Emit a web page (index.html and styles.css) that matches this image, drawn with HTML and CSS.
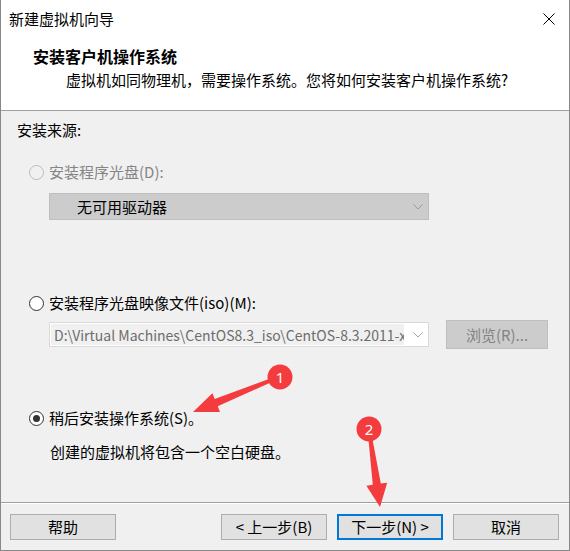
FILE: index.html
```html
<!DOCTYPE html>
<html lang="zh-CN">

<head>
    <meta charset="UTF-8">
    <title>新建虚拟机向导</title>
    <link rel="stylesheet" href="styles.css">
</head>

<body>

    <div class="window">
        <div class="top">
            <div class="titlebar">
                <span class="title">新建虚拟机向导</span>
                <svg class="close" width="12" height="12" viewBox="0 0 12 12">
                    <path d="M0.5 0.5 L11.5 11.5 M11.5 0.5 L0.5 11.5" stroke="#000" stroke-width="1" fill="none" />
                </svg>
            </div>
            <h1 class="heading">安装客户机操作系统</h1>
            <p class="subheading">虚拟机如同物理机，需要操作系统。您将如何安装客户机操作系统?</p>
        </div>

        <div class="content">
            <div class="label">安装来源:</div>

            <div class="option option-disc disabled">
                <span class="radio"></span>
                <span>安装程序光盘(D):</span>
            </div>
            <div class="select select-disabled">
                <span class="select-text">无可用驱动器</span>
                <svg class="chevron" width="10" height="6" viewBox="0 0 10 6">
                    <path d="M0.5 0.5 L5 5 L9.5 0.5" stroke="#9a9a9a" fill="none" />
                </svg>
            </div>

            <div class="option option-iso">
                <span class="radio"></span>
                <span>安装程序光盘映像文件(iso)(M):</span>
            </div>
            <div class="field-row">
                <div class="select select-path">
                    <span class="select-text">D:\Virtual Machines\CentOS8.3_iso\CentOS-8.3.2011-x</span>
                    <svg class="chevron" width="10" height="6" viewBox="0 0 10 6">
                        <path d="M0.5 0.5 L5 5 L9.5 0.5" stroke="#a8a8a8" fill="none" />
                    </svg>
                </div>
                <button class="btn-browse" disabled>浏览(R)...</button>
            </div>

            <div class="option option-later">
                <span class="radio checked"></span>
                <span>稍后安装操作系统(S)。</span>
            </div>
            <p class="desc">创建的虚拟机将包含一个空白硬盘。</p>
        </div>

        <div class="footer">
            <button class="btn">帮助</button>
            <div class="spacer"></div>
            <button class="btn">&lt; 上一步(B)</button>
            <button class="btn btn-default">下一步(N) &gt;</button>
            <button class="btn">取消</button>
        </div>

        <!-- red annotation arrows drawn over the dialog -->
        <svg class="marks" width="570" height="551" viewBox="0 0 570 551">
            <polygon fill="#f43b3e"
                points="279.6,378.4 217.7,406.3 220,411.9 193,412 212.4,393.3 214.7,398.9 278.4,375.6" />
            <circle cx="280" cy="377" r="12.5" fill="#f43b3e" />
            <text x="280" y="382.5" class="mark-num">1</text>

            <polygon fill="#f43b3e"
                points="370.5,428.8 380.8,483.6 387.2,482.7 380,507 366.4,485.7 372.8,484.8 367.5,429.2" />
            <circle cx="369" cy="429" r="12.5" fill="#f43b3e" />
            <text x="369" y="434.5" class="mark-num">2</text>
        </svg>
    </div>

</body>

</html>
```

FILE: styles.css
```css
body {
    margin: 0;
    font-family: "Noto Sans CJK SC", "Noto Sans", sans-serif;
    font-size: 15px;
    color: #000;
}

.window {
    position: relative;
    width: 570px;
    height: 551px;
    box-sizing: border-box;
    border: 1px solid #888;
    border-top: none;
    background-color: #f0f0f0;
    display: flex;
    flex-direction: column;
}

.top {
    height: 111px;
    box-sizing: border-box;
    background-color: #fff;
    border-bottom: 1px solid #a0a0a0;
}

.titlebar {
    height: 38px;
    display: flex;
    align-items: center;
    justify-content: space-between;
    padding: 0 14px 0 8px;
}

.title {
    line-height: 20px;
}

.heading {
    margin: 7px 0 0 32px;
    font-size: 16px;
    font-weight: bold;
    line-height: 22px;
}

.subheading {
    margin: 2px 0 0 65px;
    line-height: 22px;
}

.content {
    flex: 1;
    padding: 9px 0 0 16px;
}

.label {
    line-height: 20px;
}

.option {
    display: flex;
    align-items: center;
    gap: 5px;
    margin-left: 12px;
    line-height: 22px;
}

.option-disc {
    margin-top: 21px;
}

.option-iso {
    margin-top: 72px;
}

.option-later {
    margin-top: 58px;
}

.disabled {
    color: #858585;
}

.radio {
    width: 15px;
    height: 15px;
    box-sizing: border-box;
    border: 1px solid #333;
    border-radius: 50%;
    background-color: #fff;
    display: flex;
    align-items: center;
    justify-content: center;
}

.disabled .radio {
    border-color: #bcbcbc;
    background-color: #f0f0f0;
}

.radio.checked::after {
    content: "";
    width: 7px;
    height: 7px;
    border-radius: 50%;
    background-color: #333;
}

.select {
    width: 380px;
    box-sizing: border-box;
    display: flex;
    align-items: center;
    justify-content: space-between;
    overflow: hidden;
}

.select-disabled {
    margin: 10px 0 0 32px;
    height: 27px;
    border: 1px solid #bfbfbf;
    background-color: #ccc;
    padding: 0 5px 0 27px;
}

.select-text {
    white-space: nowrap;
    overflow: hidden;
}

.field-row {
    display: flex;
    align-items: center;
    gap: 17px;
    height: 29px;
    margin: 6px 0 0 32px;
}

.select-path {
    height: 25px;
    border: 1px solid #d9d9d9;
    background-color: #fff;
    padding: 1px 5px 1px 1px;
    color: #6d6d6d;
}

.select-path .select-text {
    flex: 1;
    align-self: stretch;
    display: flex;
    align-items: center;
    padding-left: 3px;
    margin-right: 9px;
    background-color: #f0f0f0;
    font-size: 14px;
}

.chevron {
    flex-shrink: 0;
}

.btn-browse {
    width: 102px;
    height: 29px;
    border: 1px solid #bfbfbf;
    background-color: #ccc;
    color: #838383;
    font: inherit;
    padding: 0;
}

.desc {
    margin: 12px 0 0 33px;
    line-height: 22px;
}

.footer {
    height: 48px;
    box-sizing: border-box;
    border-top: 1px solid #a0a0a0;
    box-shadow: inset 0 1px #fff;
    display: flex;
    align-items: flex-start;
    gap: 10px;
    padding: 11px 10px 0 9px;
}

.spacer {
    flex: 1;
}

.btn {
    width: 106px;
    height: 26px;
    box-sizing: border-box;
    border: 1px solid #adadad;
    background-color: #e1e1e1;
    font: inherit;
    color: #000;
    padding: 0;
    line-height: 22px;
}

.btn-default {
    border: 2px solid #0078d7;
}

.marks {
    position: absolute;
    left: -1px;
    top: 0;
    pointer-events: none;
}

.mark-num {
    fill: #fff;
    font-family: "Noto Sans", sans-serif;
    font-size: 15px;
    text-anchor: middle;
}
```
